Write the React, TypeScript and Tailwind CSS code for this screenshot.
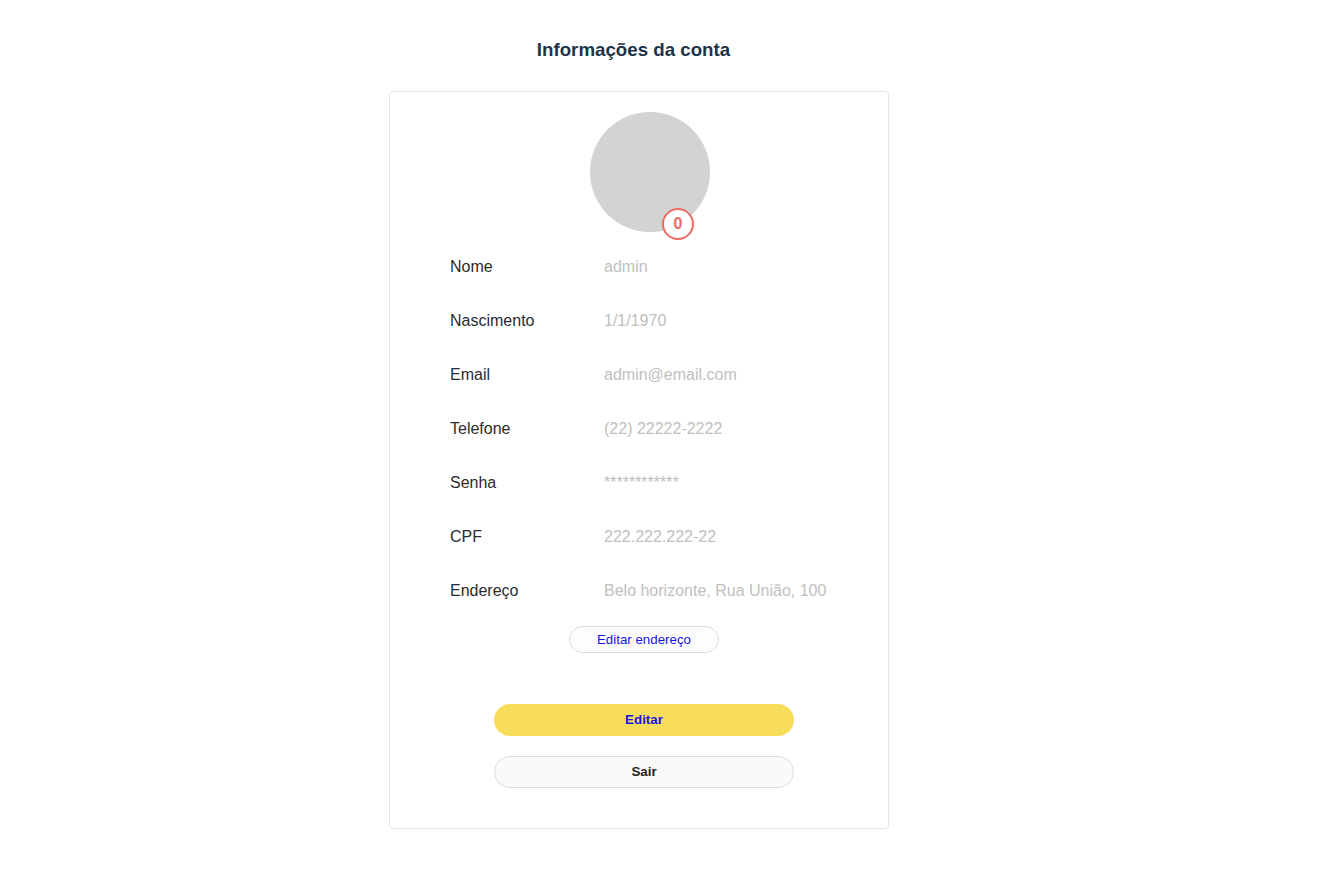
import React from "react";

const rows: [string, string][] = [
  ["Nome", "admin"],
  ["Nascimento", "1/1/1970"],
  ["Email", "admin@email.com"],
  ["Telefone", "(22) 22222-2222"],
  ["Senha", "************"],
  ["CPF", "222.222.222-22"],
  ["Endereço", "Belo horizonte, Rua União, 100"],
];

export default function App() {
  return (
    <div className="min-h-[887px] w-full bg-white font-['Liberation_Sans',Arial,sans-serif]">
      <div className="w-[500px] ml-[389px] flex flex-col">
        <h1 className="pt-[38px] h-[91px] text-center text-[18.72px] leading-[24px] font-bold text-[#1e3347] pr-[11px]">
          Informações da conta
        </h1>
        <div className="border border-[#e3e3e3] rounded-[4px] pt-[20px] pb-[40px]">
          <div className="relative w-[120px] h-[120px] ml-[200px]">
            <div className="w-[120px] h-[120px] rounded-full bg-[#d3d3d3]" />
            <div className="absolute left-[72px] top-[96px] w-[32px] h-[32px] rounded-full border-2 border-[#ef6963] bg-white flex items-center justify-center text-[#ef6963] font-bold text-[16px] leading-none">
              0
            </div>
          </div>
          <div className="mt-[8px] pl-[60px] flex flex-col">
            {rows.map(([l, v]) => (
              <div key={l} className="h-[54px] flex items-center text-[16px]">
                <span className="w-[154px] text-[#2b2b2b]">{l}</span>
                <span className="text-[#c0c0c0]">{v}</span>
              </div>
            ))}
          </div>
          <button className="mt-[8px] ml-[179px] w-[150px] h-[27px] rounded-full border border-[#dcdcdc] bg-[#fdfdfd] text-[13.333px] text-[#1a12e8] flex items-center justify-center">
            Editar endereço
          </button>
          <button className="mt-[51px] ml-[104px] w-[300px] h-[32px] rounded-full bg-[#f8dc5c] text-[13.333px] font-bold text-[#1a12e8] flex items-center justify-center">
            Editar
          </button>
          <button className="mt-[20px] ml-[104px] w-[300px] h-[32px] rounded-full border border-[#dcdcdc] bg-[#fafafa] text-[13.333px] font-bold text-[#222] flex items-center justify-center">
            Sair
          </button>
        </div>
      </div>
    </div>
  );
}
